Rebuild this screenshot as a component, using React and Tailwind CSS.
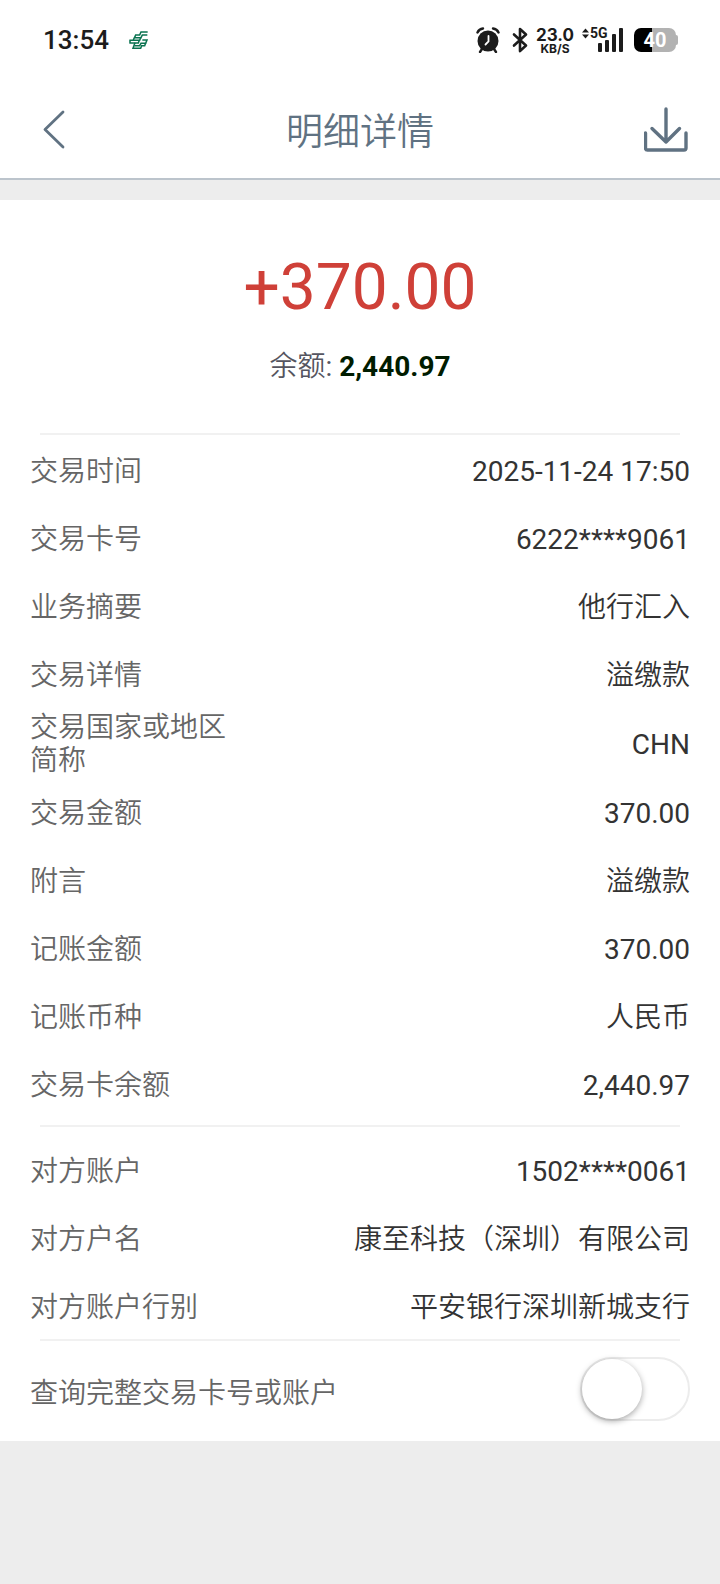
import React, { useState } from 'react';

const transactionRows = [
    { label: '交易时间', value: '2025-11-24 17:50' },
    { label: '交易卡号', value: '6222****9061' },
    { label: '业务摘要', value: '他行汇入' },
    { label: '交易详情', value: '溢缴款' },
    { label: '交易国家或地区简称', value: 'CHN' },
    { label: '交易金额', value: '370.00' },
    { label: '附言', value: '溢缴款' },
    { label: '记账金额', value: '370.00' },
    { label: '记账币种', value: '人民币' },
    { label: '交易卡余额', value: '2,440.97' },
];

const counterpartyRows = [
    { label: '对方账户', value: '1502****0061' },
    { label: '对方户名', value: '康至科技（深圳）有限公司' },
    { label: '对方账户行别', value: '平安银行深圳新城支行' },
];

const BankLogo = () => (
    <svg className="h-5 w-5" viewBox="0 0 60 60" fill="none" stroke="#0a7350" strokeWidth="4.6">
        <path d="M56 6H36L32 15H20L17 22" />
        <path d="M55 15H40L36 23H16L13 30" />
        <path d="M1 31H32L35 23M1 39H28L31 31M3 30V40" />
        <path d="M40 30H54L50 40H36L32 47H16" />
        <path d="M18 38L12 55H35L38 47H47L50 39" />
    </svg>
);

const AlarmIcon = () => (
    <svg className="h-[26px] w-[24px]" viewBox="0 0 24 26" fill="none">
        <circle cx="12" cy="14" r="10.5" fill="#1c1c1c" />
        <path d="M1.5 5.5Q3 2 7 1.5M22.5 5.5Q21 2 17 1.5" stroke="#1c1c1c" strokeWidth="2.4" strokeLinecap="round" />
        <path d="M6 22L4 25M18 22L20 25" stroke="#1c1c1c" strokeWidth="2.4" strokeLinecap="round" />
        <path d="M12.5 9V14.5L9.5 17.5" stroke="#fff" strokeWidth="1.8" strokeLinecap="round" />
    </svg>
);

const BluetoothIcon = () => (
    <svg className="h-[26px] w-4" viewBox="0 0 16 26" fill="none" stroke="#1c1c1c" strokeWidth="2.6" strokeLinejoin="round" strokeLinecap="round">
        <path d="M2 7.5L14 18.5L8 24V2L14 7.5L2 18.5" />
    </svg>
);

const SignalIcon = () => (
    <div className="relative h-[26px] w-[42px]">
        <svg className="h-full w-full" viewBox="0 0 42 26" fill="#1c1c1c">
            <path d="M0 5.5L3.5 1.5L7 5.5ZM0 7.5H7L3.5 11.5Z" />
            <rect x="16" y="16" width="4" height="9" rx="1" />
            <rect x="23" y="13" width="4" height="12" rx="1" />
            <rect x="30" y="7" width="4" height="18" rx="1" />
            <rect x="37" y="1" width="4" height="24" rx="1" />
        </svg>
        <span className="absolute -top-px left-2 text-[14px] font-bold leading-[14px]">5G</span>
    </div>
);

const Battery = () => (
    <div className="flex items-center">
        <div className="flex h-6 w-[42px] items-center justify-center rounded-[7px] bg-linear-to-r from-black from-42% to-[#b2b2b2] to-42% text-[20px] font-bold leading-none text-white">
            40
        </div>
        <div className="h-2.5 w-0.5 rounded-r-full bg-[#b2b2b2]" />
    </div>
);

const StatusBar = () => (
    <div className="flex h-20 items-center justify-between pl-[43px] pr-[42px] text-[#1c1c1c]">
        <div className="flex items-center gap-5">
            <span className="text-[26px] font-medium leading-8">13:54</span>
            <BankLogo />
        </div>
        <div className="flex items-center">
            <AlarmIcon />
            <div className="ml-3">
                <BluetoothIcon />
            </div>
            <div className="ml-2 flex flex-col items-center font-['Inter',sans-serif] font-bold">
                <span className="text-[17px] leading-4">23.0</span>
                <span className="text-[12px] leading-[11px]">KB/S</span>
            </div>
            <div className="ml-2 mr-2.5">
                <SignalIcon />
            </div>
            <Battery />
        </div>
    </div>
);

const Divider = () => <div className="mx-10 h-0.5 bg-[#f1f1f1]" />;

const DetailList = ({ rows }) => (
    <dl className="px-[30px]">
        {rows.map((row) => (
            <div key={row.label} className="flex min-h-[68px] items-center justify-between pt-1">
                <dt className="max-w-[210px] text-[#666]">{row.label}</dt>
                <dd className="text-right text-[#333]">{row.value}</dd>
            </div>
        ))}
    </dl>
);

const App = () => {
    const [showFull, setShowFull] = useState(false);

    return (
        <div className="min-h-screen bg-[#ededed] font-['Roboto','Noto_Sans_CJK_SC_DemiLight','Noto_Sans_CJK_SC',sans-serif] text-[28px] leading-[33px]">
            <header className="border-b-2 border-[#bcc4cc] bg-white">
                <StatusBar />
                <div className="grid h-[98px] grid-cols-[1fr_auto_1fr] items-center px-[30px] text-[#607282]">
                    <button type="button" aria-label="返回" className="justify-self-start px-3">
                        <svg className="h-10 w-6" viewBox="0 0 24 40" fill="none" stroke="currentColor" strokeWidth="2.8" strokeLinecap="round" strokeLinejoin="round">
                            <path d="M21 3L3 20.5L21 38" />
                        </svg>
                    </button>
                    <h1 className="pt-2 text-[37px] font-[350] leading-[48px]">明细详情</h1>
                    <button type="button" aria-label="下载" className="justify-self-end">
                        <svg className="h-[46px] w-[46px]" viewBox="0 0 46 46" fill="none" stroke="currentColor" strokeWidth="3.4" strokeLinecap="round" strokeLinejoin="round">
                            <path d="M1.5 27V42Q1.5 44 3.5 44H40Q42 44 42 42V27" />
                            <path d="M22 3V36M8 22.5L22 36L35.5 22.5" />
                        </svg>
                    </button>
                </div>
            </header>

            <main className="mt-5 bg-white">
                <section className="flex flex-col items-center pb-[50px] pt-[50px]">
                    <p className="text-[64px] leading-[76px] text-[#cf4038]">+370.00</p>
                    <p className="mt-6 text-[#555560]">
                        余额: <strong className="font-bold text-[#001c00]">2,440.97</strong>
                    </p>
                </section>
                <Divider />
                <DetailList rows={transactionRows} />
                <div className="py-2">
                    <Divider />
                </div>
                <DetailList rows={counterpartyRows} />
                <Divider />
                <div className="flex items-center justify-between px-[30px] pb-5 pt-4">
                    <label htmlFor="show-full" className="pt-2 text-[#666]">查询完整交易卡号或账户</label>
                    <input
                        id="show-full"
                        type="checkbox"
                        role="switch"
                        checked={showFull}
                        onChange={(e) => setShowFull(e.target.checked)}
                        className="h-16 w-[110px] cursor-pointer appearance-none rounded-full border-2 border-[#ececec] bg-white before:block before:h-[60px] before:w-[60px] before:rounded-full before:bg-white before:shadow-[0_2px_6px_rgba(0,0,0,0.35)] before:transition-transform checked:bg-green-500 checked:before:translate-x-[46px]"
                    />
                </div>
            </main>
        </div>
    );
};

export default App;
